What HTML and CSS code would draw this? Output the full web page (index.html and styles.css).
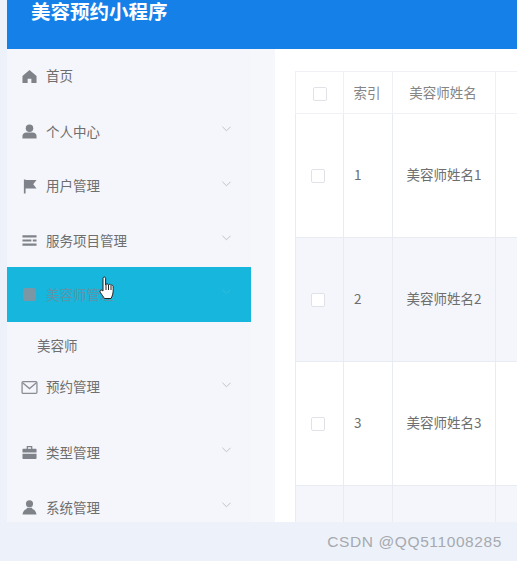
FILE: index.html
```html
<!DOCTYPE html>
<html lang="zh-CN">
<head>
<meta charset="UTF-8">
<meta name="viewport" content="width=device-width, initial-scale=1.0">
<title>美容预约小程序</title>
<link rel="stylesheet" href="styles.css">
</head>
<body>

<div class="page">
    <header class="topbar">美容预约小程序</header>
    <div class="main">
        <nav class="sidebar">
            <div class="menu-item item-home">
                <svg class="menu-icon" viewBox="0 0 16 16"><path d="M8 1 .5 7.500V15h5.500v-4.500h4V15h5.500V7.500z"/></svg>
                <span>首页</span>
            </div>
            <div class="menu-item">
                <svg class="menu-icon" viewBox="0 0 16 16"><circle cx="8" cy="4.500" r="4"/><path d="M.5 15.500v-3c0-2 2-3.500 4-3.500h7c2 0 4 1.500 4 3.500v3z"/></svg>
                <span>个人中心</span>
                <svg class="arrow" viewBox="0 0 10 6"><path d="M.5.500 5 5l4.500-4.500"/></svg>
            </div>
            <div class="menu-item item-lift">
                <svg class="menu-icon" viewBox="0 0 16 16"><path d="M2 .5h1.800v15H2zM3.800 1h11.700L12 5.500l3.500 4.500H3.800z"/></svg>
                <span>用户管理</span>
                <svg class="arrow" viewBox="0 0 10 6"><path d="M.5.500 5 5l4.500-4.500"/></svg>
            </div>
            <div class="menu-item item-short">
                <svg class="menu-icon" viewBox="0 0 16 16"><path d="M.5 2.500h15v2.200H.5zM.5 6.900h9.500v2.200H.5zM11.500 6.900h4v2.200h-4zM.5 11.300h15v2.200H.5z"/></svg>
                <span>服务项目管理</span>
                <svg class="arrow" viewBox="0 0 10 6"><path d="M.5.500 5 5l4.500-4.500"/></svg>
            </div>
            <div class="menu-item active">
                <svg class="menu-icon" viewBox="0 0 16 16"><rect x="1" y="1" width="14" height="14" rx="3"/></svg>
                <span>美容师管理</span>
                <svg class="arrow" viewBox="0 0 10 6"><path d="M.5.500 5 5l4.500-4.500"/></svg>
            </div>
            <div class="submenu-item">美容师</div>
            <div class="menu-item item-mail item-lift">
                <svg class="menu-icon icon-mail" viewBox="0 0 16 16"><rect x="1" y="2.500" width="14" height="11" rx="1"/><path d="M1.500 3.500 8 9l6.500-5.500"/></svg>
                <span>预约管理</span>
                <svg class="arrow" viewBox="0 0 10 6"><path d="M.5.500 5 5l4.500-4.500"/></svg>
            </div>
            <div class="menu-item">
                <svg class="menu-icon" viewBox="0 0 16 16"><path d="M5 1h6v3h3.800c.5 0 .7.300.7.800V8H.5V4.800c0-.5.200-.8.700-.8H5zM6.300 2.300V4h3.400V2.300zM.5 9.200h15v4.800c0 .5-.3.800-.8.800H1.300c-.5 0-.8-.3-.8-.8z"/></svg>
                <span>类型管理</span>
                <svg class="arrow" viewBox="0 0 10 6"><path d="M.5.500 5 5l4.500-4.500"/></svg>
            </div>
            <div class="menu-item">
                <svg class="menu-icon" viewBox="0 0 16 16"><circle cx="8" cy="4" r="3.800"/><path d="M5.500 8.300h5l1 1.500c2 .5 3.500 2.500 4 5.700H.500c.5-3.200 2-5.200 4-5.700z"/></svg>
                <span>系统管理</span>
                <svg class="arrow" viewBox="0 0 10 6"><path d="M.5.500 5 5l4.500-4.500"/></svg>
            </div>
        </nav>
        <div class="gutter"></div>
        <section class="content">
            <table class="data-table">
                <colgroup>
                    <col class="col-check">
                    <col class="col-index">
                    <col class="col-name">
                    <col class="col-rest">
                </colgroup>
                <thead>
                    <tr>
                        <th><span class="checkbox"></span></th>
                        <th>索引</th>
                        <th>美容师姓名</th>
                        <th></th>
                    </tr>
                </thead>
                <tbody>
                    <tr>
                        <td class="cell-check"><span class="checkbox"></span></td>
                        <td class="cell-index">1</td>
                        <td>美容师姓名1</td>
                        <td></td>
                    </tr>
                    <tr class="even">
                        <td class="cell-check"><span class="checkbox"></span></td>
                        <td class="cell-index">2</td>
                        <td>美容师姓名2</td>
                        <td></td>
                    </tr>
                    <tr>
                        <td class="cell-check"><span class="checkbox"></span></td>
                        <td class="cell-index">3</td>
                        <td>美容师姓名3</td>
                        <td></td>
                    </tr>
                    <tr class="even">
                        <td></td>
                        <td></td>
                        <td></td>
                        <td></td>
                    </tr>
                </tbody>
            </table>
        </section>
    </div>
    <footer class="watermark">CSDN @QQ511008285</footer>
</div>

<svg class="cursor" viewBox="0 0 16 24"><path d="M4 2.200c0-1.600 2.600-1.600 2.600 0V9l.4-.6c.6-.8 2.200-.6 2.400.4.600-.8 2.200-.6 2.400.6.800-.6 2.200-.2 2.300 1 .2 3 .2 6-.6 8.500-.4 1.500-.9 2.600-1.500 3.600H5.500c-1-1.500-2.500-3.500-4.300-6.300-.9-1.500.9-2.800 2-1.700L4 15z"/><path class="cursor-lines" d="M7 9v5M9.500 9v5M12 10v4"/></svg>

</body>
</html>
```

FILE: styles.css
```css
html, body {
    height: 100%;
}
body {
    margin: 0;
    padding: 0;
    background-color: #edf2fa;
    font-family: "Noto Sans CJK SC", "Noto Sans", sans-serif;
    font-size: 13.5px;
    color: #6e6e6e;
    overflow: hidden;
    position: relative;
}
.page {
    margin-left: 7px;
    display: flex;
    flex-direction: column;
    height: 561px;
}
.topbar {
    flex: none;
    height: 49px;
    padding-left: 24px;
    background-color: #1581e8;
    color: #fff;
    font-size: 19.500px;
    font-weight: 700;
    line-height: 22px;
    box-sizing: border-box;
}
.main {
    flex: none;
    height: 473px;
    display: flex;
    overflow: hidden;
}
.sidebar {
    flex: none;
    width: 244px;
    background-color: #f4f6fb;
}
.menu-item {
    display: flex;
    align-items: center;
    height: 55px;
    padding: 0 20px 0 15px;
    box-sizing: border-box;
}
.menu-item span {
    margin: 0 0 2px 9px;
    flex: 1;
}
.item-lift span {
    margin-bottom: 4px;
}
.item-home {
    padding-bottom: 1px;
}
.item-short {
    height: 53px;
}
.item-mail {
    height: 35px;
    margin-bottom: 20px;
}
.menu-icon {
    flex: none;
    width: 15px;
    height: 15px;
    fill: #7f8389;
}
.icon-mail {
    width: 17px;
    height: 17px;
    margin: 0 -1px;
    fill: none;
    stroke: #8a8d93;
    stroke-width: 1.200;
}
.arrow {
    flex: none;
    width: 9px;
    height: 6px;
    margin-top: -6px;
    fill: none;
    stroke: #b9bcc2;
    stroke-width: 1;
}
.active {
    background-color: #17b6dc;
    color: #5f93aa;
}
.active .menu-icon {
    fill: #7b96a5;
}
.active .arrow {
    stroke: #3cbcdb;
}
.submenu-item {
    height: 48px;
    line-height: 46px;
    padding-left: 30px;
}
.gutter {
    flex: none;
    width: 24px;
    background-color: #f5f7fa;
}
.content {
    flex: 1;
    min-width: 0;
    background-color: #fff;
    padding: 22px 0 0 20px;
}
.data-table {
    width: 222px;
    table-layout: fixed;
    border-collapse: collapse;
}
.col-check, .col-index {
    width: 49px;
}
.col-check {
    width: 48px;
}
.col-name {
    width: 103px;
}
.col-rest {
    width: 22px;
}
.data-table th, .data-table td {
    border: 1px solid #e9ebf3;
    padding: 0 0 3px;
    text-align: center;
    font-weight: 400;
    height: 124px;
    box-sizing: border-box;
}
.data-table th {
    height: 42px;
    padding: 0 2px 2px 0;
    color: #858585;
    border-color: #f0f1f6;
}
.data-table th .checkbox {
    margin-left: 3px;
}
.data-table td.cell-index {
    text-align: left;
    padding-left: 10px;
}
.even td {
    background-color: #f4f6fb;
}
.checkbox {
    display: inline-block;
    width: 12px;
    height: 12px;
    border: 1px solid #e0e2e8;
    border-radius: 2px;
    background-color: #fff;
    vertical-align: middle;
}
.cell-check .checkbox {
    margin-right: 4px;
}
.watermark {
    flex: 1;
    display: flex;
    align-items: center;
    justify-content: flex-end;
    padding-right: 15px;
    font-family: "Liberation Sans", sans-serif;
    font-size: 15.500px;
    letter-spacing: .6px;
    color: #a6a9af;
}
.cursor {
    position: absolute;
    left: 99px;
    top: 276px;
    width: 16px;
    height: 24px;
    fill: #fff;
    stroke: #222;
    stroke-width: 1;
}
.cursor-lines {
    fill: none;
}
```
